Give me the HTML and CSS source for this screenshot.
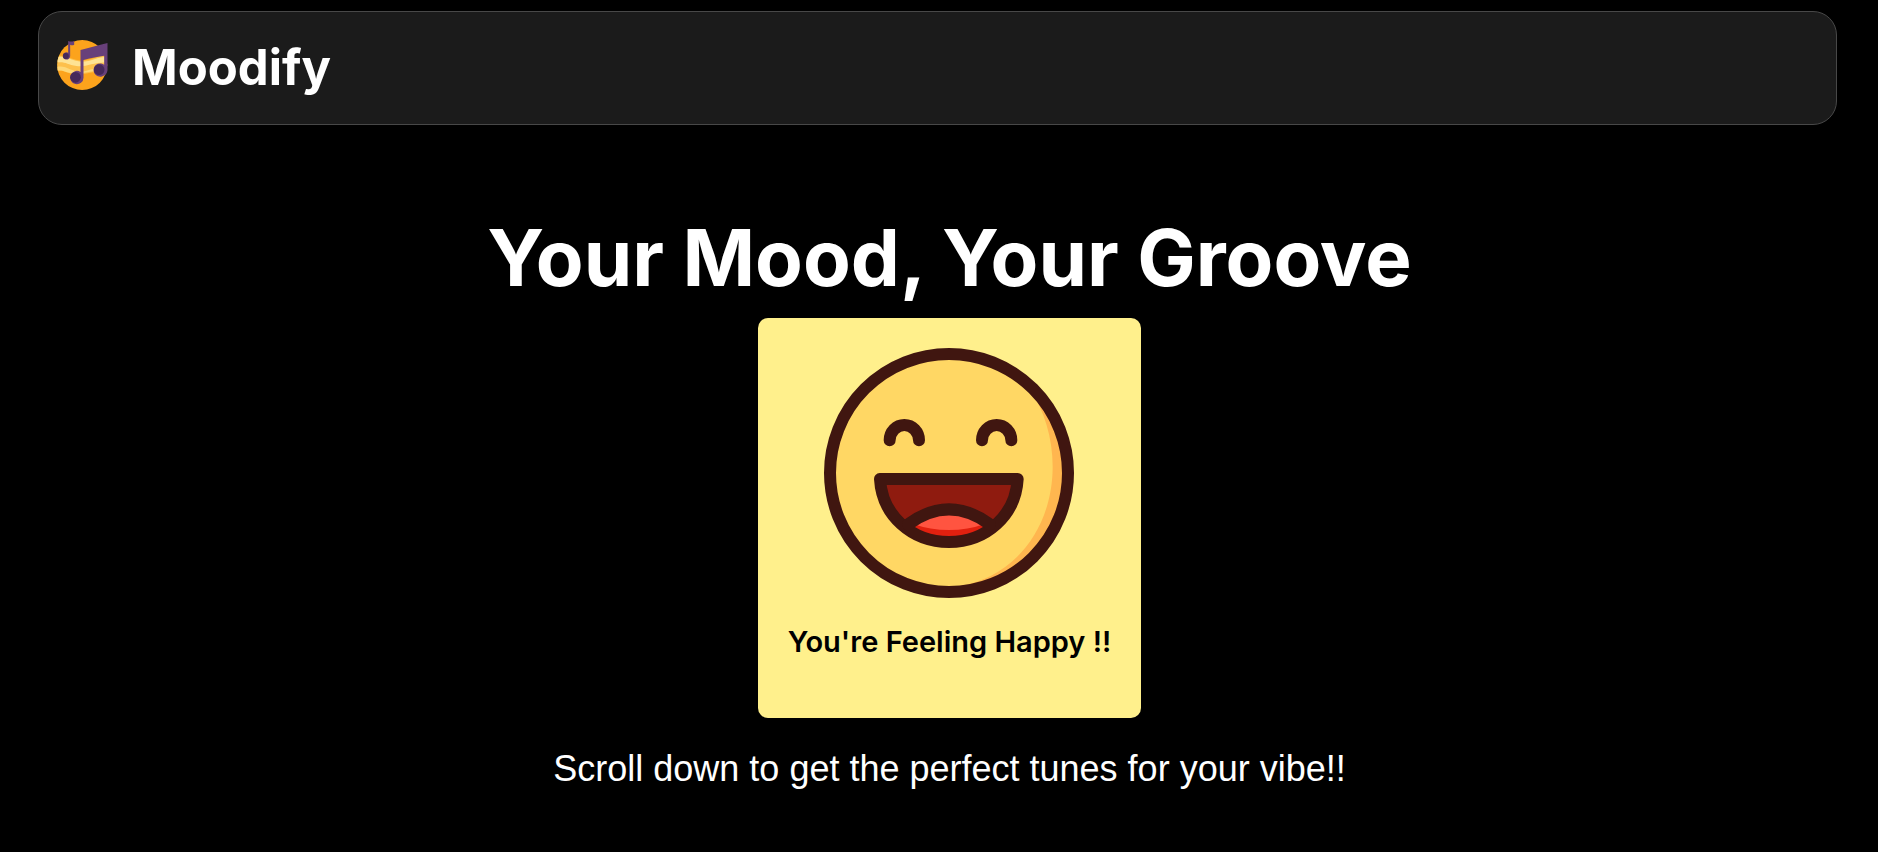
FILE: index.html
```html
<!DOCTYPE html>
<html lang="en">
<head>
<meta charset="utf-8">
<meta name="viewport" content="width=device-width, initial-scale=1">
<title>Moodify</title>
<link rel="stylesheet" href="styles.css">
</head>
<body>
<header class="navbar">
  <svg class="logo" viewBox="0 0 152 150" aria-hidden="true">
    <defs><clipPath id="disc"><circle cx="75" cy="75" r="75"/></clipPath></defs>
    <g clip-path="url(#disc)">
      <rect width="152" height="150" fill="#fca31c"/>
      <path d="M0 49C28 42 44 62 73 62S120 46 152 46V101C112 88 86 106 56 103S20 88 0 92Z" fill="#fdc04c"/>
      <path d="M0 52C28 45 44 65 73 65S120 50 152 50V68C112 65 86 83 58 78S24 64 0 67Z" fill="#fee394"/>
      <path d="M0 80C28 75 44 96 70 95S116 78 152 85V94C112 86 86 103 56 101S20 88 0 92Z" fill="#fed878"/>
    </g>
    <path d="M33 3Q42 6 51 3V14Q44 17 39 14V49A11 11 0 1 1 33 38Z" fill="#68407a"/>
    <circle cx="26" cy="48" r="9" fill="#46295a"/>
    <path d="M70 30C98 22 122 17 151 9V91C150 100 144 108 132 110A20 20 0 1 1 141 74V47C116 51 98 54 79 60V113A20 20 0 1 1 70 96Z" fill="#68407a"/>
    <circle cx="55" cy="112" r="16" fill="#46295a"/>
    <circle cx="126" cy="89" r="16" fill="#46295a"/>
  </svg>
  <span class="brand">Moodify</span>
</header>
<main class="hero">
  <h1 class="title">Your Mood, Your Groove</h1>
  <section class="card">
    <svg class="face" viewBox="0 0 750 750" role="img" aria-label="Laughing face">
      <circle cx="375" cy="375" r="357" fill="#ffd764"/>
      <path d="M615 116C662 190 686 270 686 356C686 540 570 692 400 715L418 725A350 350 0 0 0 722 375C722 280 690 200 615 116Z" fill="#ffb64f"/>
      <path d="M168 393H581C575 502 487 582 375 582S174 502 168 393Z" fill="#8f1b0f"/>
      <path d="M255 533Q375 435 495 533Q440 582 375 582T255 533Z" fill="#e2200f"/>
      <path d="M265 527Q375 435 485 527Q375 565 265 527Z" fill="#ff5440"/>
      <g fill="none" stroke="#401610" stroke-width="36" stroke-linecap="round" stroke-linejoin="round">
        <circle cx="375" cy="375" r="357"/>
        <path d="M197 277A44 46 0 0 1 285 277M474 277A44 46 0 0 1 562 277"/>
        <path d="M168 393H581C575 502 487 582 375 582S174 502 168 393Z"/>
        <path d="M252 529Q375 439 498 529"/>
      </g>
    </svg>
    <h2 class="mood">You're Feeling Happy !!</h2>
  </section>
  <p class="hint">Scroll down to get the perfect tunes for your vibe!!</p>
</main>
</body>
</html>
```
FILE: styles.css
```css
* {
  box-sizing: border-box;
}

body {
  margin: 0;
  background: #000;
  color: #fff;
  font-family: Inter, "Liberation Sans", sans-serif;
}

.navbar {
  display: flex;
  align-items: flex-start;
  gap: 24px;
  margin: 11px 41px 0 38px;
  padding: 28px 18px 28px;
  border: 1px solid #484848;
  border-radius: 24px;
  background: #1b1b1b;
}

.logo {
  width: 51px;
  height: 50px;
}

.brand {
  font-size: 49px;
  font-weight: 700;
  line-height: 56px;
}

.hero {
  display: flex;
  flex-direction: column;
  align-items: center;
  padding: 85px 0 48px 21px;
}

.title {
  margin: 0;
  font-size: 78px;
  font-weight: 700;
  line-height: 96px;
  text-align: center;
}

.card {
  display: flex;
  flex-direction: column;
  align-items: center;
  margin-top: 12px;
  padding: 30px 30px 56px;
  border-radius: 10px;
  background: #fff08c;
  color: #000;
}

.face {
  width: 250px;
  height: 250px;
}

.mood {
  margin: 24px 0 0;
  font-size: 29px;
  font-weight: 600;
  line-height: 40px;
}

.hint {
  margin: 28px 0 0;
  font-family: "Liberation Sans", Arial, sans-serif;
  font-size: 36px;
  line-height: 46px;
  text-align: center;
}
```
